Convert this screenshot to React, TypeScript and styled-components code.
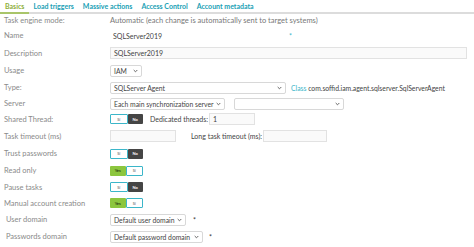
import styled, { createGlobalStyle } from 'styled-components';

const GlobalStyle = createGlobalStyle`
  body {
    margin: 0;
    background: #fff;
    font-family: Lato, 'Open Sans', sans-serif;
    font-size: 7px;
    color: #444;
  }
`;

const Tabs = styled.div`
  display: flex;
  gap: 9px;
  height: 12px;
  padding-left: 5px;
  border-bottom: 2px solid #dcdcdc;
`;

const Tab = styled.div<{ $active?: boolean }>`
  position: relative;
  font-weight: 700;
  font-size: 7px;
  line-height: 12px;
  color: ${(p) => (p.$active ? '#8dae3a' : '#1a9fb5')};
  &::after {
    content: '';
    display: ${(p) => (p.$active ? 'block' : 'none')};
    position: absolute;
    left: -5px;
    right: -5px;
    bottom: -2px;
    height: 2px;
    background: #a9c56a;
  }
`;

const Form = styled.div`
  display: grid;
  grid-template-columns: 106px 1fr;
  padding-left: 4px;
`;

const Label = styled.div<{ $h: number }>`
  height: ${(p) => p.$h}px;
  display: flex;
  align-items: center;
  font-size: 7.5px;
  color: #8a8a8a;
  white-space: nowrap;
`;

const Value = styled.div<{ $h: number }>`
  height: ${(p) => p.$h}px;
  display: flex;
  align-items: center;
  white-space: nowrap;
`;

const Plain = styled.span<{ $muted?: boolean }>`
  color: ${(p) => (p.$muted ? '#777' : '#444')};
  font-size: ${(p) => (p.$muted ? 7.5 : 7)}px;
  padding-left: ${(p) => (p.$muted ? 0 : 3)}px;
`;

const Input = styled.div<{ $w: number }>`
  box-sizing: border-box;
  width: ${(p) => p.$w}px;
  height: 12px;
  border: 1px solid #e2e2e2;
  background: #fafafa;
  padding-left: 3px;
  display: flex;
  align-items: center;
`;

const Select = styled.div<{ $w: number }>`
  box-sizing: border-box;
  width: ${(p) => p.$w}px;
  height: 12px;
  border: 1px solid #d8d8d8;
  border-radius: 2px;
  background: #fff;
  padding: 0 3px;
  display: flex;
  align-items: center;
  justify-content: space-between;
  font-size: 6.8px;
  overflow: hidden;
`;

const Chevron = () => (
  <svg width="5" height="4" viewBox="0 0 5 4">
    <path d="M0.7 1 L2.5 2.8 L4.3 1" fill="none" stroke="#555" strokeWidth="0.9" />
  </svg>
);

const Star = styled.span<{ $teal?: boolean; $left: number }>`
  margin-left: ${(p) => p.$left}px;
  color: ${(p) => (p.$teal ? '#3bb6c9' : '#333')};
  font-size: 7px;
`;

const Toggle = styled.div`
  display: flex;
  height: 10px;
  width: 33px;
`;

const Half = styled.div<{ $kind: 'on' | 'off' | 'blank' }>`
  flex: 1;
  box-sizing: border-box;
  display: flex;
  align-items: center;
  justify-content: center;
  font-size: 4px;
  font-weight: 700;
  border-radius: 1px;
  background: ${(p) => (p.$kind === 'on' ? '#8cc63e' : p.$kind === 'off' ? '#454545' : '#fff')};
  color: ${(p) => (p.$kind === 'on' ? '#2a3a10' : p.$kind === 'off' ? '#fff' : '#8a8a8a')};
  border: ${(p) => (p.$kind === 'blank' ? '1.5px solid #3bb6c9' : 'none')};
`;

const Switch = ({ on }: { on: boolean }) => (
  <Toggle>
    {on ? (
      <>
        <Half $kind="on">Yes</Half>
        <Half $kind="blank">Sí</Half>
      </>
    ) : (
      <>
        <Half $kind="blank">Sí</Half>
        <Half $kind="off">No</Half>
      </>
    )}
  </Toggle>
);

const Text = styled.span<{ $left?: number; $right?: number }>`
  margin-left: ${(p) => p.$left ?? 0}px;
  margin-right: ${(p) => p.$right ?? 0}px;
`;

const ClassText = styled.span`
  margin-left: 5px;
  font-size: 6.8px;
`;

const ClassLink = styled.span`
  color: #3bb6c9;
`;

const App = () => (
  <>
    <GlobalStyle />
    <Tabs>
      <Tab $active>Basics</Tab>
      <Tab>Load triggers</Tab>
      <Tab>Massive actions</Tab>
      <Tab>Access Control</Tab>
      <Tab>Account metadata</Tab>
    </Tabs>
    <Form>
      <Label $h={13}>Task engine mode:</Label>
      <Value $h={13}>
        <Plain $muted>Automatic (each change is automatically sent to target systems)</Plain>
      </Value>

      <Label $h={17}>Name</Label>
      <Value $h={17}>
        <Plain>SQLServer2019</Plain>
        <Star $teal $left={127}>*</Star>
      </Value>

      <Label $h={18}>Description</Label>
      <Value $h={18}>
        <Input $w={357}>SQLServer2019</Input>
      </Value>

      <Label $h={17}>Usage</Label>
      <Value $h={17}>
        <Select $w={32}>
          IAM <Chevron />
        </Select>
      </Value>

      <Label $h={17}>Type:</Label>
      <Value $h={17}>
        <Select $w={176}>
          SQLServer Agent <Chevron />
        </Select>
        <ClassText>
          <ClassLink>Class</ClassLink> com.soffid.iam.agent.sqlserver.SqlServerAgent
        </ClassText>
      </Value>

      <Label $h={15}>Server</Label>
      <Value $h={15}>
        <Select $w={115}>
          Each main synchronization server <Chevron />
        </Select>
        <Text $left={9} />
        <Select $w={110}>
          <span />
          <Chevron />
        </Select>
      </Value>

      <Label $h={16}>Shared Thread:</Label>
      <Value $h={16}>
        <Switch on={false} />
        <Text $left={7} $right={1}>Dedicated threads:</Text>
        <Input $w={46}>1</Input>
      </Value>

      <Label $h={18}>Task timeout (ms)</Label>
      <Value $h={18}>
        <Input $w={66} />
        <Text $left={15} $right={1}>Long task timeout (ms):</Text>
        <Input $w={64} />
      </Value>

      <Label $h={17}>Trust passwords</Label>
      <Value $h={17}>
        <Switch on={false} />
      </Value>

      <Label $h={17}>Read only</Label>
      <Value $h={17}>
        <Switch on />
      </Value>

      <Label $h={16}>Pause tasks</Label>
      <Value $h={16}>
        <Switch on={false} />
      </Value>

      <Label $h={16}>Manual account creation</Label>
      <Value $h={16}>
        <Switch on />
      </Value>

      <Label $h={17}>&nbsp;User domain</Label>
      <Value $h={17}>
        <Select $w={76}>
          Default user domain <Chevron />
        </Select>
        <Star $left={7}>*</Star>
      </Value>

      <Label $h={17}>&nbsp;Passwords domain</Label>
      <Value $h={17}>
        <Select $w={93}>
          Default password domain <Chevron />
        </Select>
        <Star $left={6}>*</Star>
      </Value>
    </Form>
  </>
);

export default App;
